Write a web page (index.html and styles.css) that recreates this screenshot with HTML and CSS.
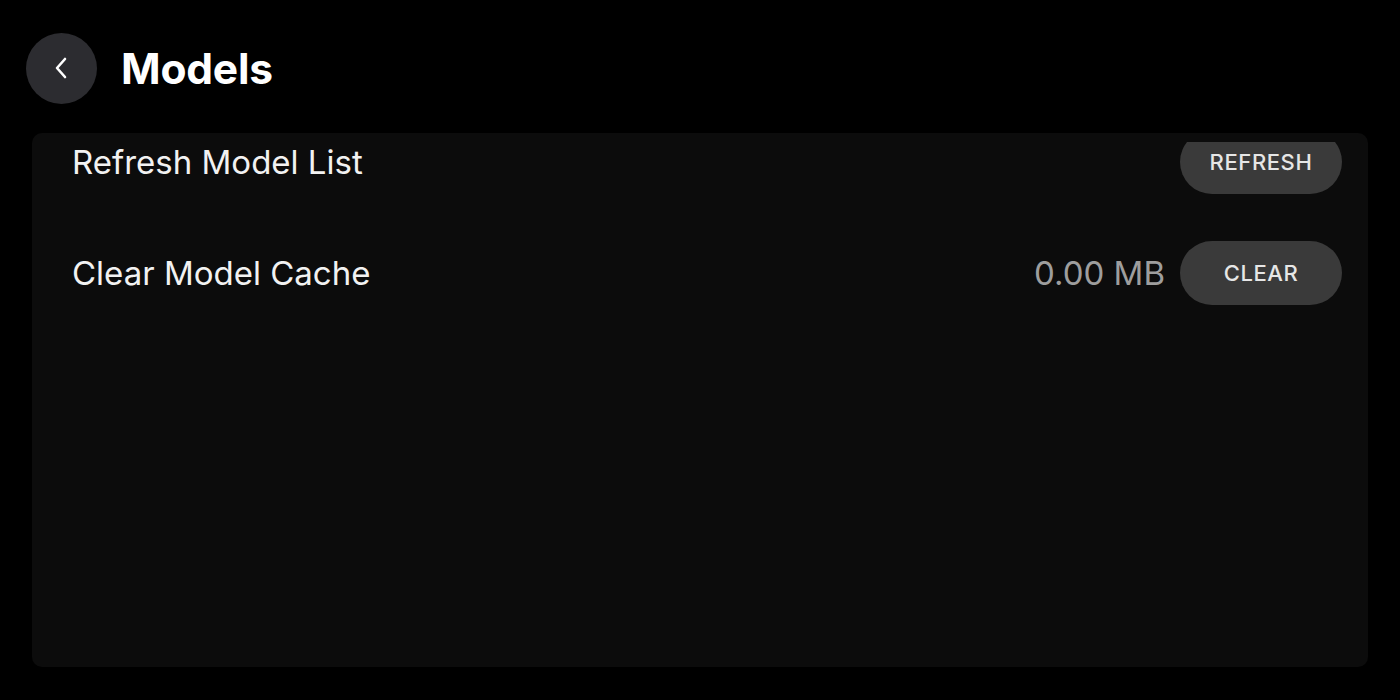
FILE: index.html
```html
<!DOCTYPE html>
<html>
<head>
<meta charset="utf-8">
<link rel="stylesheet" href="styles.css">
</head>
<body>
<div class="page">
  <header class="header">
    <button class="back" aria-label="Back">
      <svg width="14" height="22" viewBox="0 0 14 22"><path d="M11 2 L3 11 L11 20" fill="none" stroke="#fff" stroke-width="2.6" stroke-linecap="round" stroke-linejoin="round"/></svg>
    </button>
    <h1 class="title">Models</h1>
  </header>
  <section class="panel">
    <div class="scroll">
      <div class="list">
        <div class="row">
          <span class="label">Refresh Model List</span>
          <div class="actions">
            <button class="pill">REFRESH</button>
          </div>
        </div>
        <div class="row">
          <span class="label">Clear Model Cache</span>
          <div class="actions">
            <span class="value">0.00 MB</span>
            <button class="pill">CLEAR</button>
          </div>
        </div>
      </div>
    </div>
  </section>
</div>
</body>
</html>
```
FILE: styles.css
```css
html, body {
  margin: 0;
  padding: 0;
  background: #000;
  height: 100%;
}
body {
  font-family: Inter, "Noto Sans", sans-serif;
  color: #fff;
}
.page {
  display: flex;
  flex-direction: column;
  height: 700px;
  box-sizing: border-box;
  padding: 0 32px 33px 32px;
}
.header {
  display: flex;
  align-items: center;
  height: 133px;
  margin-left: -6px;
  gap: 24px;
  padding-top: 3px;
  box-sizing: border-box;
}
.back {
  width: 71px;
  height: 71px;
  border-radius: 50%;
  border: none;
  background: #2c2c30;
  display: flex;
  align-items: center;
  justify-content: center;
  padding: 0 2px 0 0;
  margin: 0;
}
.title {
  margin: 0;
  font-size: 42.5px;
  font-weight: 700;
  letter-spacing: -0.2px;
}
.panel {
  flex: 1;
  background: #0c0c0c;
  border-radius: 10px;
  padding-top: 9px;
  display: flex;
  flex-direction: column;
  overflow: hidden;
}
.scroll {
  flex: 1;
  overflow: hidden;
}
.list {
  margin-top: -12px;
  display: flex;
  flex-direction: column;
  gap: 47px;
  padding: 0 26px 0 40px;
}
.row {
  display: flex;
  align-items: center;
  justify-content: space-between;
  height: 64px;
}
.label {
  font-size: 33px;
  color: #f2f2f2;
}
.actions {
  display: flex;
  align-items: center;
  gap: 15px;
}
.value {
  font-size: 33px;
  color: #9e9e9e;
}
.pill {
  width: 162px;
  height: 64px;
  border-radius: 32px;
  border: none;
  background: #3a3a3a;
  color: #e6e6e6;
  font-family: Inter, "Noto Sans", sans-serif;
  font-size: 22px;
  font-weight: 500;
  letter-spacing: 0.6px;
  padding: 0;
}
```
